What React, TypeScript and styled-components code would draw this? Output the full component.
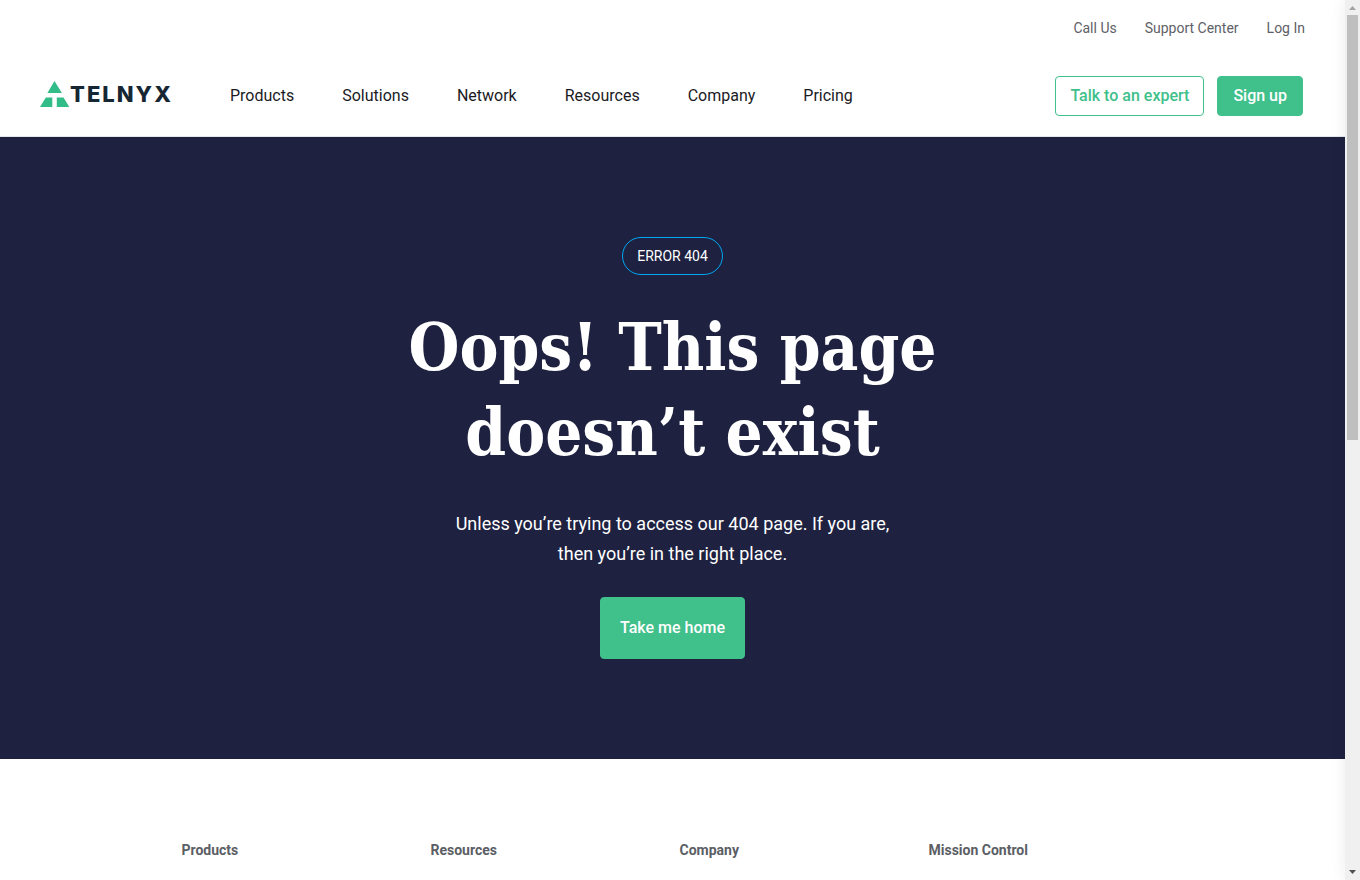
import React from "react";
import styled, { createGlobalStyle } from "styled-components";

const GlobalStyle = createGlobalStyle`
  * { box-sizing: border-box; }
  body { margin: 0; background: #fff; font-family: Roboto, "Liberation Sans", sans-serif; }
  a { color: inherit; text-decoration: none; }
`;

const Shell = styled.div`
  display: grid;
  grid-template-columns: minmax(0, 1fr) 15px;
  height: 100vh;
`;

const Page = styled.div`
  overflow: hidden;
`;

const Header = styled.header`
  border-bottom: 1px solid #e6e8ec;
  padding: 0 40px 20px;
`;

const UtilityNav = styled.nav`
  display: flex;
  justify-content: flex-end;
  gap: 28px;
  padding: 16px 0 24px;
  color: #5e6167;
  font-size: 14px;
  line-height: 24px;
  margin-bottom: 12px;
`;

const MainBar = styled.div`
  display: flex;
  align-items: center;
  height: 40px;
  padding-right: 2px;
`;

const Logo = styled.a`
  display: flex;
  align-items: center;
  width: 190px;
  flex: none;
  padding-bottom: 4px;
  color: #162733;
  font-family: Inter, sans-serif;
  font-size: 22px;
  font-weight: 800;
  line-height: 28px;
  letter-spacing: 2px;
`;

const MainNav = styled.nav`
  display: flex;
  flex: 1;
  gap: 48px;
  color: #1b1b1f;
  font-size: 16px;
  line-height: 24px;
`;

const Actions = styled.div`
  display: flex;
  gap: 13px;
`;

const Button = styled.button<{ $outline?: boolean; $large?: boolean }>`
  height: ${(p) => (p.$large ? 62 : 40)}px;
  padding: 0 ${(p) => (p.$large ? 19 : p.$outline ? 14 : 15)}px;
  border: 1px solid #40c08b;
  border-radius: 4px;
  background: ${(p) => (p.$outline ? "#fff" : "#40c08b")};
  color: ${(p) => (p.$outline ? "#40c08b" : "#fff")};
  font: 500 16px/24px Roboto, "Liberation Sans", sans-serif;
  cursor: pointer;
`;

const Hero = styled.main`
  display: flex;
  flex-direction: column;
  align-items: center;
  padding: 100px 24px;
  background: #1e2140;
  color: #fff;
  text-align: center;
`;

const Badge = styled.span`
  padding: 6px 14px;
  border: 1px solid #00a9f4;
  border-radius: 20px;
  font-size: 14px;
  line-height: 24px;
`;

const Title = styled.h1`
  max-width: 640px;
  margin: 30px 0 34px;
  font-family: "DejaVu Serif Condensed", "DejaVu Serif", serif;
  font-size: 65px;
  font-weight: 700;
  line-height: 85px;
`;

const Lead = styled.p`
  max-width: 460px;
  margin: 0 0 28px;
  font-size: 18px;
  line-height: 30px;
`;

const Footer = styled.footer`
  display: grid;
  grid-template-columns: repeat(4, 1fr);
  max-width: 996px;
  margin: 0 auto;
  padding: 79px 0;
`;

const FooterHeading = styled.h2`
  margin: 0;
  padding: 0 7px;
  color: #5b5e64;
  font-size: 14px;
  font-weight: 700;
  line-height: 24px;
`;

const ScrollTrack = styled.div`
  display: flex;
  flex-direction: column;
  background: #f0f0f0;
  box-shadow: 0 0 16px rgba(0, 0, 0, 0.08);
  z-index: 1;
`;

const ScrollRange = styled.div`
  flex: 1;
  padding: 0 2px;
`;

const ScrollThumb = styled.div`
  height: 50%;
  background: #bfbfbf;
`;

const Arrow = styled.svg`
  display: block;
  width: 15px;
  height: 15px;
`;

const LogoMark = () => (
  <svg width="30" height="26" viewBox="0 0 30 26" fill="#32bc88" aria-hidden="true">
    <path d="M14.5 0 21.9 12H7.4zM5.8 16.6h6.5V26H0zM16.8 16.6h6.7L29.3 26H16.8z" />
  </svg>
);

const utility = ["Call Us", "Support Center", "Log In"];
const sections = ["Products", "Solutions", "Network", "Resources", "Company", "Pricing"];
const footerColumns = ["Products", "Resources", "Company", "Mission Control"];

export default function App() {
  return (
    <Shell>
      <GlobalStyle />
      <Page>
        <Header>
          <UtilityNav aria-label="Utility">
            {utility.map((t) => <a key={t} href="#">{t}</a>)}
          </UtilityNav>
          <MainBar>
            <Logo href="#"><LogoMark />TELNYX</Logo>
            <MainNav aria-label="Main">
              {sections.map((t) => <a key={t} href="#">{t}</a>)}
            </MainNav>
            <Actions>
              <Button $outline>Talk to an expert</Button>
              <Button>Sign up</Button>
            </Actions>
          </MainBar>
        </Header>
        <Hero>
          <Badge>ERROR 404</Badge>
          <Title>Oops! This page<br />doesn’t exist</Title>
          <Lead>Unless you’re trying to access our 404 page. If you are, then you’re in the right place.</Lead>
          <Button $large>Take me home</Button>
        </Hero>
        <Footer>
          {footerColumns.map((t) => <FooterHeading key={t}>{t}</FooterHeading>)}
        </Footer>
      </Page>
      <ScrollTrack aria-hidden="true">
        <Arrow viewBox="0 0 15 15" fill="#a3a3a3"><path d="M4 10h7L7.5 6z" /></Arrow>
        <ScrollRange><ScrollThumb /></ScrollRange>
        <Arrow viewBox="0 0 15 15" fill="#505050"><path d="M4 5h7L7.5 9z" /></Arrow>
      </ScrollTrack>
    </Shell>
  );
}
